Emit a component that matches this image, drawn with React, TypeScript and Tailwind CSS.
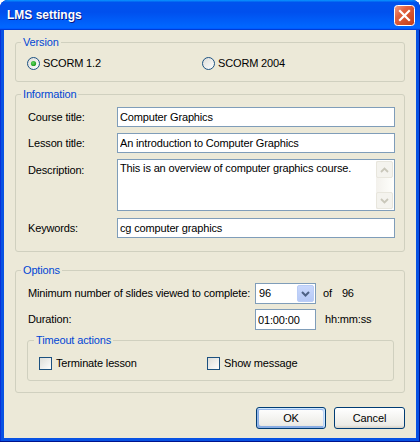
import React from "react";

/* LMS settings — Windows XP (Luna) style dialog */

function Radio({ checked }: { checked?: boolean }) {
  return (
    <svg width="13" height="13" viewBox="0 0 13 13" className="shrink-0">
      <defs>
        <linearGradient id={checked ? "rg-on" : "rg-off"} x1="0" y1="0" x2="1" y2="1">
          <stop offset="0" stopColor="#DCDCD7" />
          <stop offset="1" stopColor="#FFFFFF" />
        </linearGradient>
        <radialGradient id="rdot" cx="0.4" cy="0.4" r="0.6">
          <stop offset="0" stopColor="#61DB61" />
          <stop offset="1" stopColor="#1E9A1E" />
        </radialGradient>
      </defs>
      <circle cx="6.5" cy="6.5" r="6" fill={`url(#${checked ? "rg-on" : "rg-off"})`} stroke="#1C5180" />
      {checked && <circle cx="6.5" cy="6.5" r="2.6" fill="url(#rdot)" />}
    </svg>
  );
}

function Check() {
  return (
    <svg width="13" height="13" viewBox="0 0 13 13" className="shrink-0">
      <defs>
        <linearGradient id="cbg" x1="0" y1="0" x2="1" y2="1">
          <stop offset="0" stopColor="#DCDCD7" />
          <stop offset="1" stopColor="#FFFFFF" />
        </linearGradient>
      </defs>
      <rect x="0.5" y="0.5" width="12" height="12" fill="url(#cbg)" stroke="#1C5180" />
    </svg>
  );
}

function Group({
  label,
  sub,
  children,
  className = "",
}: {
  label: string;
  sub?: boolean;
  children: React.ReactNode;
  className?: string;
}) {
  return (
    <fieldset className={`rounded-[3px] border border-[#D0D0BF] ${className}`}>
      <legend
        className={`px-[2px] text-[11px] leading-[13px] text-[#0046D5] ${sub ? "ml-[6px]" : "ml-[5px]"}`}
      >
        {label}
      </legend>
      {children}
    </fieldset>
  );
}

function TextBox({ value, className = "" }: { value: string; className?: string }) {
  return (
    <input
      readOnly
      defaultValue={value}
      className={`min-w-0 border border-[#7F9DB9] bg-white px-[2px] text-[11px] tracking-[-0.15px] text-black outline-none ${className}`}
    />
  );
}

function ScrollArrow({ up }: { up?: boolean }) {
  return (
    <div className="flex h-[17px] w-[17px] items-center justify-center rounded-[2px] border border-[#E8E6DD] bg-[#F4F3EE]">
      <svg width="9" height="6" viewBox="0 0 9 6">
        <path
          d={up ? "M1 5 L4.5 1.5 L8 5" : "M1 1 L4.5 4.5 L8 1"}
          fill="none"
          stroke="#C9C7BA"
          strokeWidth="1.8"
        />
      </svg>
    </div>
  );
}

function XpButton({ children, primary, className = "" }: { children: React.ReactNode; primary?: boolean; className?: string }) {
  return (
    <button
      className={`h-[22px] rounded-[3px] border border-[#003C74] bg-[linear-gradient(180deg,#ffffff,#ecebe6_86%,#d6d0c5)] text-[11px] text-black ${
        primary
          ? "shadow-[inset_-1px_1px_#cee7ff,inset_1px_2px_#98b8ea,inset_-2px_2px_#bcd4f6,inset_1px_-1px_#89ade4,inset_2px_-2px_#89ade4]"
          : ""
      } ${className}`}
    >
      {children}
    </button>
  );
}

export default function App() {
  return (
    <div className="h-[442px] w-[420px] bg-white font-['Liberation_Sans',Arial,sans-serif] text-[11px] tracking-[-0.15px] text-black">
      <div className="flex h-full flex-col rounded-t-[8px] bg-[#0852E3] shadow-[inset_-1px_-1px_#00138c,inset_1px_1px_#0831d9]">
        {/* title bar */}
        <div className="flex h-[30px] shrink-0 items-center justify-between rounded-t-[8px] bg-[linear-gradient(180deg,#0997ff,#0053ee_8%,#0050ee_40%,#06f_88%,#06f_93%,#005bff_95%,#003dd7_96%,#003dd7)] pl-[7px] pr-[5px]">
          <span className="text-[12px] font-bold leading-none tracking-normal text-white [text-shadow:1px_1px_#0A1883]">
            LMS settings
          </span>
          <svg width="21" height="21" viewBox="0 0 21 21">
            <defs>
              <linearGradient id="closebg" x1="0" y1="0" x2="1" y2="1">
                <stop offset="0" stopColor="#F0A08A" />
                <stop offset="0.35" stopColor="#E2623F" />
                <stop offset="1" stopColor="#C13B15" />
              </linearGradient>
            </defs>
            <rect x="0.5" y="0.5" width="20" height="20" rx="3" fill="url(#closebg)" stroke="#FFFFFF" />
            <path d="M6 6 L15 15 M15 6 L6 15" stroke="#FFFFFF" strokeWidth="2.2" strokeLinecap="square" />
          </svg>
        </div>

        {/* client area */}
        <div className="mx-[4px] mb-[4px] flex flex-1 flex-col whitespace-nowrap bg-[#ECE9D8]">
          <Group label="Version" className="mx-[11px] mt-[6px]">
            <div className="flex pb-[11px] pl-[11px] pt-[8px]">
              <label className="flex w-[175px] items-center gap-[3px]">
                <Radio checked />
                <span className="leading-[13px]">SCORM 1.2</span>
              </label>
              <label className="flex items-center gap-[3px]">
                <Radio />
                <span className="leading-[13px]">SCORM 2004</span>
              </label>
            </div>
          </Group>

          <Group label="Information" className="mx-[11px] mt-[6px]">
            <div className="flex flex-col pb-[13px] pl-[12px] pr-[9px] pt-[6px]">
              <div className="flex items-center">
                <span className="w-[89px] shrink-0">Course title:</span>
                <TextBox value="Computer Graphics" className="h-[20px] flex-1" />
              </div>
              <div className="mt-[6px] flex items-center">
                <span className="w-[89px] shrink-0">Lesson title:</span>
                <TextBox value="An introduction to Computer Graphics" className="h-[20px] flex-1" />
              </div>
              <div className="mt-[6px] flex items-start">
                <span className="w-[89px] shrink-0 pt-[3px]">Description:</span>
                <div className="flex h-[52px] flex-1 border border-[#7F9DB9] bg-white">
                  <p className="flex-1 whitespace-normal px-[2px] pt-[2px] leading-[13px]">
                    This is an overview of computer graphics course.
                  </p>
                  <div className="my-[1px] mr-[1px] flex w-[17px] flex-col justify-between bg-[linear-gradient(90deg,#F3F1EC,#FEFEFB)]">
                    <ScrollArrow up />
                    <ScrollArrow />
                  </div>
                </div>
              </div>
              <div className="mt-[7px] flex items-center">
                <span className="w-[89px] shrink-0">Keywords:</span>
                <TextBox value="cg computer graphics" className="h-[20px] flex-1" />
              </div>
            </div>
          </Group>

          <Group label="Options" className="mx-[11px] mt-[12px]">
            <div className="flex flex-col pb-[11px] pl-[11px] pr-[10px] pt-[6px]">
              <div className="flex items-center pl-[1px]">
                <span className="w-[227px] shrink-0">Minimum number of slides viewed to complete:</span>
                <div className="flex h-[21px] w-[61px] items-center border border-[#7F9DB9] bg-white p-[1px]">
                  <span className="flex-1 pl-[2px]">96</span>
                  <div className="flex h-full w-[17px] items-center justify-center rounded-[2px] border border-[#BACDF6] bg-[linear-gradient(180deg,#C9D8FC,#B6C9F6)]">
                    <svg width="9" height="6" viewBox="0 0 9 6">
                      <path d="M1 1 L4.5 4.5 L8 1" fill="none" stroke="#4D6185" strokeWidth="2" />
                    </svg>
                  </div>
                </div>
                <span className="ml-[7px]">of</span>
                <span className="ml-[10px]">96</span>
              </div>
              <div className="mt-[5px] flex items-center pl-[1px]">
                <span className="w-[227px] shrink-0">Duration:</span>
                <TextBox value="01:00:00" className="h-[21px] w-[61px]" />
                <span className="ml-[9px]">hh:mm:ss</span>
              </div>

              <Group label="Timeout actions" sub className="mt-[4px]">
                <div className="flex pb-[10px] pl-[11px] pt-[10px]">
                  <label className="flex w-[168px] items-center gap-[4px]">
                    <Check />
                    <span className="leading-[13px]">Terminate lesson</span>
                  </label>
                  <label className="flex items-center gap-[4px]">
                    <Check />
                    <span className="leading-[13px]">Show message</span>
                  </label>
                </div>
              </Group>
            </div>
          </Group>

          <div className="mr-[11px] mt-[14px] flex justify-end gap-[8px]">
            <XpButton primary className="w-[70px]">
              OK
            </XpButton>
            <XpButton className="w-[71px]">Cancel</XpButton>
          </div>
        </div>
      </div>
    </div>
  );
}
